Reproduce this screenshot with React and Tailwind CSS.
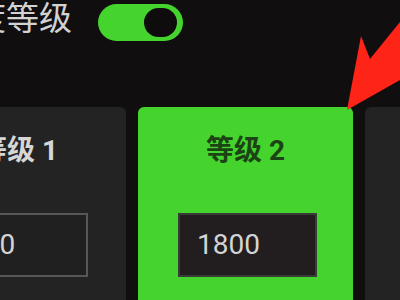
export default function App() {
  const cards = [
    { label: '1', value: '800', active: false },
    { label: '2', value: '1800', active: true },
    { label: '3', value: '3200', active: false },
  ]

  return (
    <div className="relative w-[400px] h-[300px] overflow-hidden bg-[#100e0f] font-['Roboto','Noto_Sans_CJK_SC',sans-serif]">
      <div className="flex items-start ml-[-93px] h-[44px]">
        <span className="mt-[1px] text-[33px] leading-[36px] text-[#d2d2d2] whitespace-nowrap">灵敏度等级</span>
        <div className="ml-[26px] mt-[4px] w-[85px] h-[37px] rounded-full bg-[#45d42e] flex items-center justify-end pr-[3px]">
          <div className="w-[39px] h-[35px] rounded-full bg-[#0e0c0d] border-[3px] border-[#45d42e]" />
        </div>
      </div>

      <div className="flex gap-[12px] ml-[-89px] mt-[63px]">
        {cards.map((card) => (
          <div
            key={card.label}
            className={
              card.active
                ? 'w-[215px] h-[220px] shrink-0 rounded-[6px] bg-[#45d42e] pt-[28px] flex flex-col'
                : 'w-[215px] h-[220px] shrink-0 rounded-[6px] bg-[#232323] pt-[28px] flex flex-col'
            }
          >
            <p
              className={
                card.active
                  ? 'text-center text-[28px] leading-[32px] font-bold text-[#1c4314]'
                  : 'text-center text-[28px] leading-[32px] font-bold text-[#d6d6d6]'
              }
            >
              等级 {card.label}
            </p>
            <div
              className={
                card.active
                  ? 'ml-[40px] mt-[46px] w-[139px] h-[64px] bg-[#221e1f] border-2 border-[#3a3a3a] flex items-center pl-[17px] text-[28px] text-[#d4d4d4]'
                  : 'ml-[38px] mt-[46px] w-[139px] h-[64px] bg-[#202020] border-2 border-[#575757] flex items-center pl-[17px] text-[28px] text-[#d4d4d4]'
              }
            >
              {card.value}
            </div>
          </div>
        ))}
      </div>

      <svg className="absolute left-0 top-0" width="400" height="300" viewBox="0 0 400 300">
        <polygon points="347,110 361,36 370,59 400,22 400,80" fill="#ff2418" />
      </svg>
    </div>
  )
}
